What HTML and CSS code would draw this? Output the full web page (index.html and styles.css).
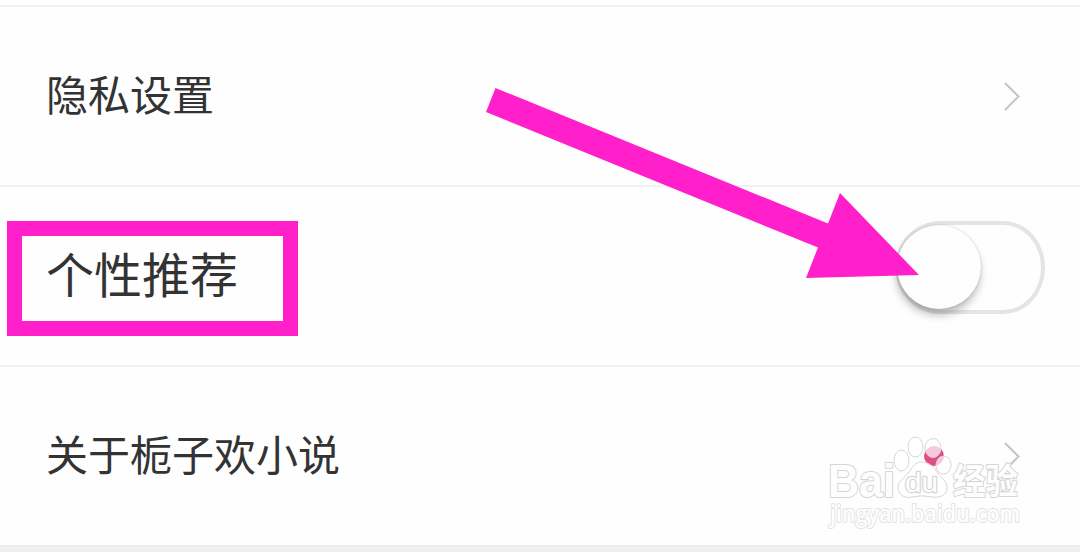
FILE: index.html
```html
<!DOCTYPE html>
<html lang="zh-CN">
<head>
<meta charset="utf-8">
<title>设置</title>
<link rel="stylesheet" href="styles.css">
</head>
<body>
<main class="settings">
  <section class="row">
    <span class="label">隐私设置</span>
    <svg class="chevron" viewBox="0 0 18 30"><path d="M2 2 15.500 15.500 2 29"/></svg>
  </section>
  <section class="row row-switch">
    <span class="label label-large">个性推荐</span>
    <span class="switch"><span class="knob"></span></span>
  </section>
  <section class="row">
    <span class="label">关于栀子欢小说</span>
    <span class="dot"></span>
    <svg class="chevron" viewBox="0 0 18 30"><path d="M2 2 15.500 15.500 2 29"/></svg>
  </section>
</main>
<div class="highlight"></div>
<svg class="arrow" viewBox="0 0 1080 552">
  <path d="M495.500 88 828 223.500 840 193 919 275 806 278 818 247.500 486 112Z"/>
</svg>
<svg class="watermark" viewBox="820 430 210 105">
  <g class="mark">
    <text class="brand" x="828" y="496.500" textLength="67" lengthAdjust="spacingAndGlyphs">Bai</text>
    <ellipse cx="901.500" cy="460.500" rx="7.500" ry="10.500"/>
    <ellipse cx="915.500" cy="447" rx="7.500" ry="10"/>
    <ellipse cx="933" cy="448" rx="8" ry="9.500"/>
    <ellipse cx="943.500" cy="465" rx="7.500" ry="9"/>
    <path d="M921 462C928 462 932 465 937 472 943 480 947 481 947 488 947 495 940 498 932 497Q922 494.500 912 497C904 499 898 494 898 487 898 481 904 479 909 472 913 466 916 462 921 462Z"/>
    <text class="du" x="905" y="492" textLength="33" lengthAdjust="spacingAndGlyphs">du</text>
    <text class="cn" x="953" y="494" textLength="65" lengthAdjust="spacingAndGlyphs">经验</text>
    <text class="site" x="830" y="522" textLength="190" lengthAdjust="spacingAndGlyphs">jingyan.baidu.com</text>
  </g>
</svg>
</body>
</html>
```
FILE: styles.css
```css
body {
  margin: 0;
  height: 552px;
  overflow: hidden;
  position: relative;
  background: #efefef;
  font-family: "Noto Sans CJK SC", sans-serif;
  color: #333;
}

.settings {
  height: 546px;
  box-sizing: border-box;
  padding-top: 5px;
  background: #fefefe;
  border-bottom: 1px solid #e9e9e9;
}

.row {
  display: flex;
  align-items: center;
  height: 180px;
  box-sizing: border-box;
  padding: 0 59px 0 46px;
  border-top: 2px solid #f1f1f1;
}

.row-switch {
  padding-right: 35px;
}

.label {
  flex: 1;
  padding-bottom: 6px;
  font-size: 42px;
  line-height: 60px;
  white-space: nowrap;
}

.label-large {
  padding-bottom: 9px;
  font-size: 48px;
}

.chevron {
  width: 18px;
  height: 30px;
  fill: none;
  stroke: #c7c7c7;
  stroke-width: 2.2;
}

.dot {
  width: 20px;
  height: 20px;
  margin-right: 59px;
  border-radius: 50%;
  background: #e34b86;
}

.switch {
  display: flex;
  width: 150px;
  height: 93px;
  box-sizing: border-box;
  margin-bottom: 18px;
  border: 4px solid #e4e4e4;
  border-radius: 46px 42px 42px 46px / 47px;
}

.knob {
  width: 84px;
  height: 84px;
  margin-left: -2px;
  border-radius: 50%;
  background: #fefefe;
  box-shadow: -1px 6px 8px rgba(0, 0, 0, 0.27), 0 0 2px rgba(0, 0, 0, 0.2);
}

.highlight {
  position: absolute;
  left: 7px;
  top: 221px;
  width: 291px;
  height: 115px;
  box-sizing: border-box;
  border: 15px solid #ff20cb;
}

.arrow {
  position: absolute;
  inset: 0;
  width: 1080px;
  height: 552px;
  fill: #ff20cb;
}

.watermark {
  position: absolute;
  left: 820px;
  top: 430px;
  width: 210px;
  height: 105px;
}

.mark {
  fill: rgba(255, 255, 255, 0.7);
  stroke: #d6d6d6;
  stroke-width: 1;
}

.mark text {
  fill: #fefefe;
  paint-order: stroke;
  stroke-linejoin: round;
  stroke-width: 2.2;
}

.brand,
.du {
  font-family: "Liberation Sans", Arial, sans-serif;
  font-weight: 700;
}

.brand {
  font-size: 46px;
}

.mark .du {
  font-size: 27px;
  font-weight: 400;
  stroke-width: 2.4;
}

.cn {
  font-size: 35px;
  font-weight: 700;
}

.mark .site {
  font-family: "Open Sans", sans-serif;
  font-size: 23px;
  font-weight: 600;
  stroke: #e2e2e2;
  stroke-width: 1.8;
}
```
